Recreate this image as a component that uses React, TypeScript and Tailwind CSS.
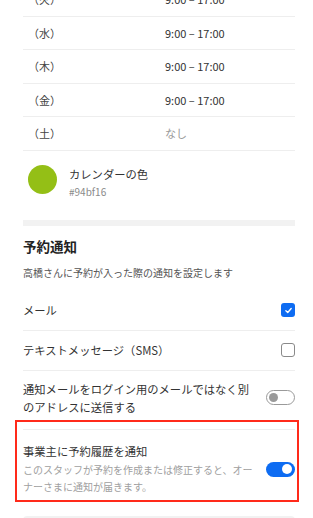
import type { ReactNode } from 'react'

type Hours = { day: string; time: string; off?: boolean }

const hours: Hours[] = [
  { day: '（火）', time: '9:00 – 17:00' },
  { day: '（水）', time: '9:00 – 17:00' },
  { day: '（木）', time: '9:00 – 17:00' },
  { day: '（金）', time: '9:00 – 17:00' },
  { day: '（土）', time: 'なし', off: true },
]

function Checkbox({ checked }: { checked: boolean }) {
  if (checked) {
    return (
      <span className="flex h-[14px] w-[14px] items-center justify-center rounded-[3px] bg-[#0e6cf2]">
        <svg viewBox="0 0 12 12" className="h-[9px] w-[9px]" fill="none">
          <path d="M2.5 6.3 5 8.6 9.6 3.4" stroke="white" strokeWidth="1.8" strokeLinecap="round" strokeLinejoin="round" />
        </svg>
      </span>
    )
  }
  return <span className="block h-[14px] w-[14px] rounded-[3px] border-[1.5px] border-[#8a8a8a] bg-white" />
}

function Toggle({ on }: { on: boolean }) {
  return on ? (
    <span className="flex h-[15px] w-[29px] items-center justify-end rounded-full bg-[#0e6cf2] pr-[3px]">
      <span className="h-[10px] w-[10px] rounded-full bg-white" />
    </span>
  ) : (
    <span className="flex h-[15px] w-[29px] items-center rounded-full border-[1.5px] border-[#9a9a9a] bg-white pl-[2px]">
      <span className="h-[9px] w-[9px] rounded-full bg-[#9a9a9a]" />
    </span>
  )
}

function SettingRow({ children, control }: { children: ReactNode; control: ReactNode }) {
  return (
    <div className="flex h-10 items-center justify-between border-b border-[#eeeeee]">
      <span className="text-[11.3px] text-[#333333]">{children}</span>
      {control}
    </div>
  )
}

export default function App() {
  return (
    <div
      className="h-[518px] overflow-hidden bg-white pl-[23px] pr-[18px]"
      style={{ fontFamily: '"Noto Sans CJK JP", "Noto Sans", sans-serif' }}
    >
      <div className="mt-[-17px]">
        {hours.map(h => (
          <div key={h.day} className="flex h-[33.5px] items-center border-b border-[#eeeeee] text-[11px]">
            <span className="w-[142px] pl-[5px] text-[#444444]">{h.day}</span>
            <span className={h.off ? 'text-[#999999]' : 'text-[#333333]'}>{h.time}</span>
          </div>
        ))}
      </div>

      <div className="flex h-[69px] items-start gap-[12px] pl-[5px] pt-[14px]">
        <span className="h-[29px] w-[29px] rounded-full bg-[#94bf16]" />
        <div className="flex flex-col">
          <span className="text-[11.3px] leading-[18px] text-[#333333]">カレンダーの色</span>
          <span className="text-[10px] leading-[18px] text-[#8a8a8a]">#94bf16</span>
        </div>
      </div>

      <div className="h-[6px] bg-[#f2f2f2]" />

      <h2 className="mt-[10px] text-[13.5px] font-bold leading-[20px] text-[#222222]">予約通知</h2>
      <p className="mt-[10px] text-[10px] leading-[14px] text-[#555555]">高橋さんに予約が入った際の通知を設定します</p>

      <div className="mt-[11px]">
        <SettingRow control={<Checkbox checked />}>メール</SettingRow>
        <SettingRow control={<Checkbox checked={false} />}>テキストメッセージ（SMS）</SettingRow>

        <div className="flex items-center justify-between border-b border-[#eeeeee] pb-[13px] pt-[9px]">
          <span className="w-[236px] text-[11.3px] leading-[18px] text-[#333333]">
            通知メールをログイン用のメールではなく別のアドレスに送信する
          </span>
          <Toggle on={false} />
        </div>

        <div className="relative flex items-center justify-between pb-[5px] pt-[12px]">
          <div className="flex w-[232px] flex-col">
            <span className="text-[11.3px] leading-[18px] text-[#333333]">事業主に予約履歴を通知</span>
            <span className="mt-[1px] text-[10px] leading-[17px] text-[#a0a0a0]">
              このスタッフが予約を作成または修正すると、オーナーさまに通知が届きます。
            </span>
          </div>
          <div className="mt-[2px]">
            <Toggle on />
          </div>
          <div className="pointer-events-none absolute bottom-[-2px] left-[-8px] right-[-4px] top-[-10px] border-2 border-[#ff2a1a]" />
        </div>
      </div>

      <div className="mt-[16px] h-[10px] rounded-[4px] bg-[#f2f2f2]" />
    </div>
  )
}
